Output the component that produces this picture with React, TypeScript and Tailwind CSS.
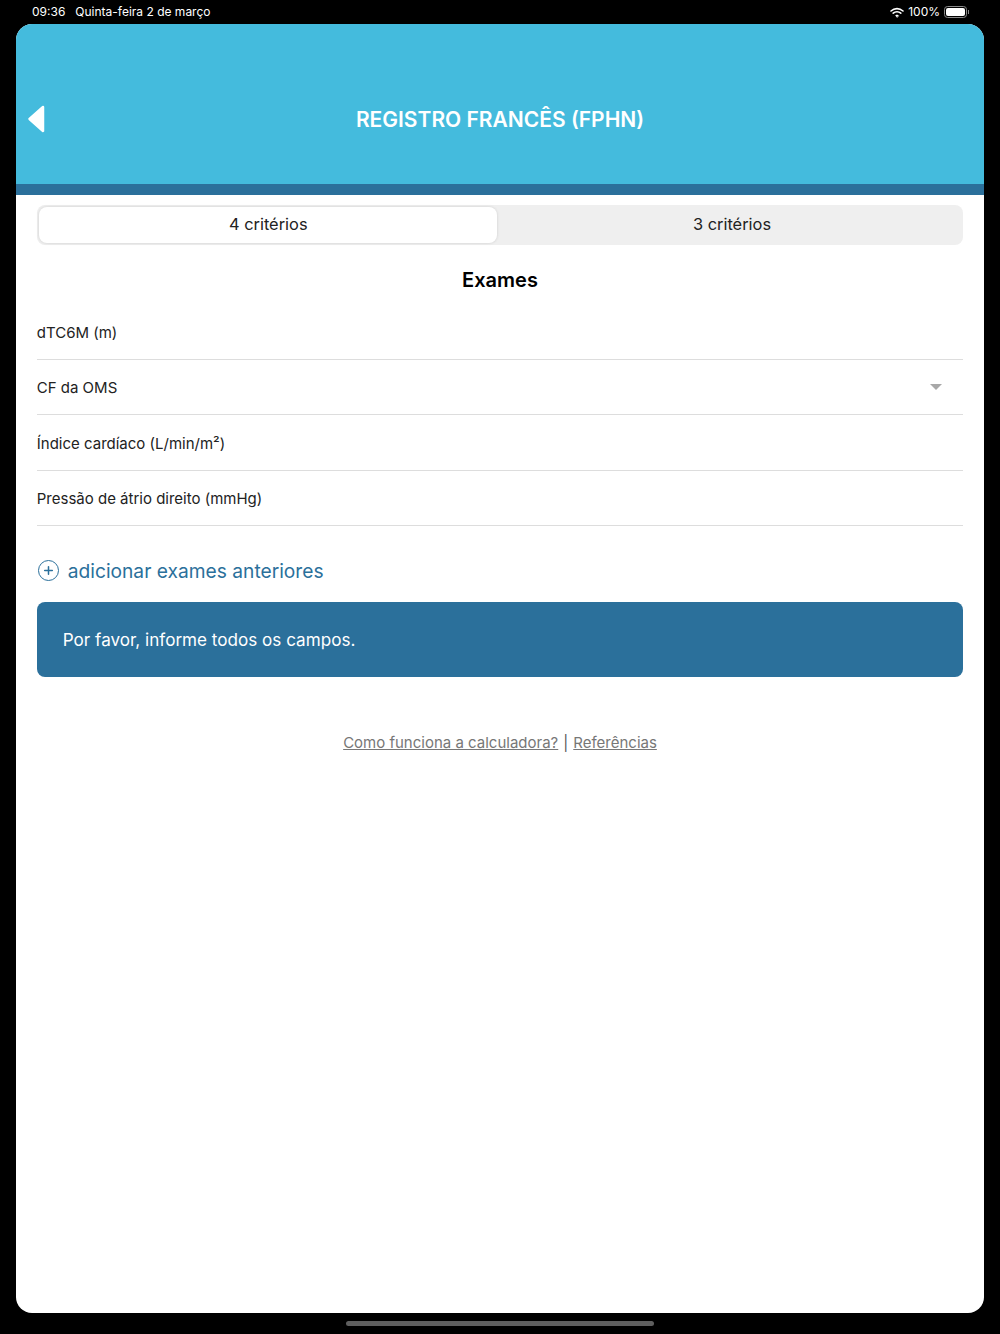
import { Plus } from "lucide-react";

const fields = ["dTC6M (m)", "CF da OMS", "Índice cardíaco (L/min/m²)", "Pressão de átrio direito (mmHg)"];

function StatusBar() {
  return (
    <div className="flex h-6 items-center justify-between pl-[32px] pr-[31px] text-[12px] text-white">
      <div className="flex gap-[10px]">
        <span>09:36</span>
        <span>Quinta-feira 2 de março</span>
      </div>
      <div className="flex items-center gap-[4px]">
        <svg width="14" height="11" viewBox="0 0 14 11" fill="none" stroke="white" strokeWidth="1.6" strokeLinecap="round">
          <path d="M1 4 C4.5 0.8 9.5 0.8 13 4" />
          <path d="M3.2 6.2 C5.3 4.4 8.7 4.4 10.8 6.2" />
          <path d="M7 10.2 L5.6 8.5 C6.4 7.9 7.6 7.9 8.4 8.5 Z" fill="white" strokeWidth="0.6" />
        </svg>
        <span>100%</span>
        <div className="flex items-center">
          <div className="flex h-[12px] w-[23px] rounded-[3.5px] border border-[#8a8a8a] p-[1px]">
            <div className="w-full rounded-[2px] bg-white" />
          </div>
          <div className="ml-[1px] h-[4px] w-[1px] bg-[#8a8a8a]" />
        </div>
      </div>
    </div>
  );
}

function App() {
  return (
    <div className="flex h-[1334px] w-[1000px] flex-col overflow-hidden bg-black font-['Inter',sans-serif]">
      <StatusBar />
      <div className="mx-4 flex h-[1289px] flex-col overflow-hidden rounded-[16px] bg-white">
        <div className="relative flex h-[160px] items-center justify-center bg-[#44bbdd] pt-[32px]">
          <svg className="absolute left-[11px] top-[81px]" width="18" height="28" viewBox="0 0 18 28">
            <path d="M16 2 L2.5 14 L16 26 Z" fill="white" stroke="white" strokeWidth="2.5" strokeLinejoin="round" />
          </svg>
          <h1 className="text-[21px] font-semibold text-white">REGISTRO FRANCÊS (FPHN)</h1>
        </div>
        <div className="h-[11px] bg-[#2b709b]" />
        <div className="flex flex-col px-[20.75px] pt-[10px]">
          <div className="flex h-10 rounded-lg bg-[#efefef] p-[2px] text-[16.4px] text-[#222222]">
            <div className="flex w-[458px] items-center justify-center rounded-lg bg-white pb-[2px] pl-[1px] shadow-[0_0_2px_1px_#dedede]">4 critérios</div>
            <div className="flex flex-1 items-center justify-center pb-[2px] pl-[6px]">3 critérios</div>
          </div>
          <h2 className="mt-[23px] text-center text-[20px] leading-6 font-semibold text-black">Exames</h2>
          <div className="mt-[12px] flex flex-col">
            {fields.map((label, i) => (
              <div key={label} className="flex h-[55.5px] items-center justify-between border-b border-[#dddddd] text-[15px] text-[#222222]">
                <span className="pt-[3px]">{label}</span>
                {i === 1 && (
                  <svg className="mr-[21px]" width="12" height="6" viewBox="0 0 12 6">
                    <path d="M0 0 H12 L6 6 Z" fill="#a8a8a8" />
                  </svg>
                )}
              </div>
            ))}
          </div>
          <div className="mt-[32.5px] flex items-center gap-[9px] text-[19.2px] leading-6 text-[#2b709b]">
            <div className="ml-[1px] flex h-[21px] w-[21px] items-center justify-center rounded-full border-[1.8px] border-[#2b709b]">
              <Plus size={13} strokeWidth={2.8} />
            </div>
            <span>adicionar exames anteriores</span>
          </div>
          <div className="mt-[19px] flex h-[75.5px] items-center rounded-lg bg-[#2b709b] pl-[26px] pt-[1px] text-[17.1px] text-white">
            Por favor, informe todos os campos.
          </div>
          <div className="mt-[53.5px] flex items-center justify-center gap-[5px] text-[15px] leading-6 text-[#777777]">
            <span className="underline">Como funciona a calculadora?</span>
            <span className="text-[#555555]">|</span>
            <span className="underline">Referências</span>
          </div>
        </div>
      </div>
      <div className="flex flex-1 items-center justify-center">
        <div className="h-[5px] w-[308px] rounded-full bg-[#5e5e5e]" />
      </div>
    </div>
  );
}

export default App;
